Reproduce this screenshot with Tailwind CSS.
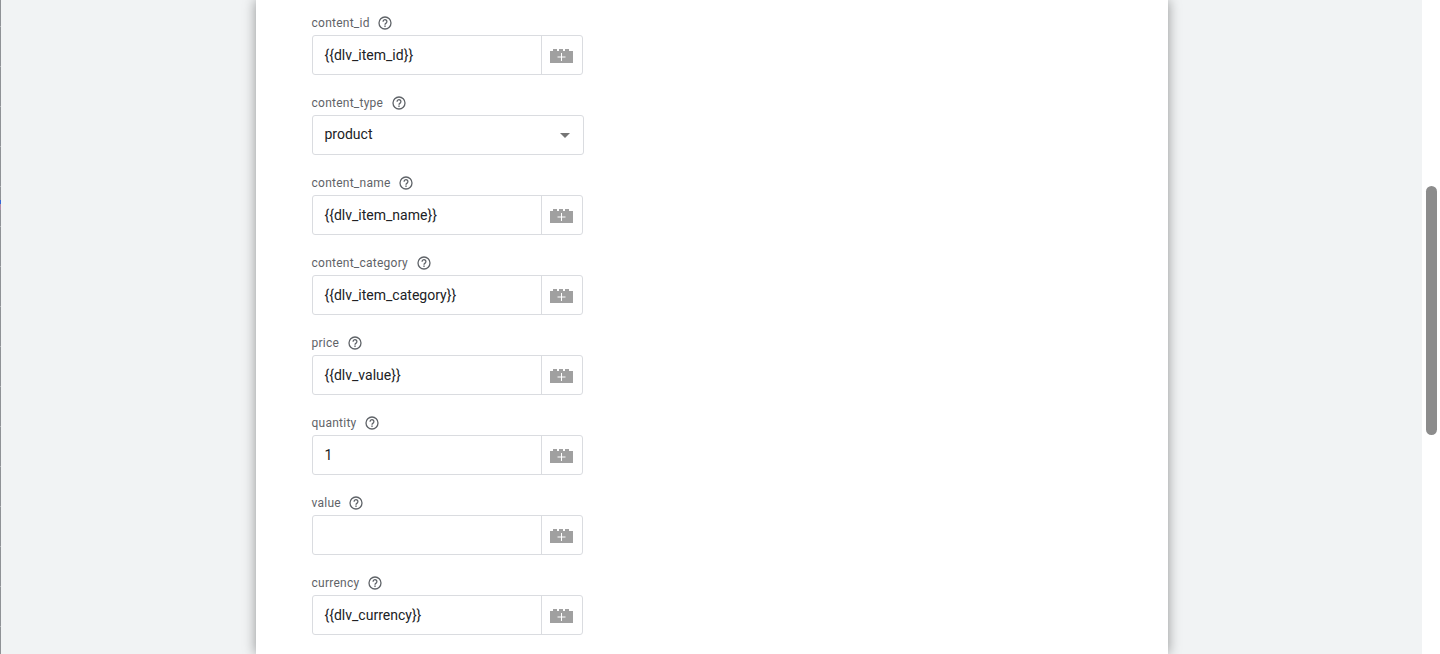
<!DOCTYPE html>
<html lang="en">
<head>
<meta charset="UTF-8">
<title>Tag configuration</title>
<script src="https://cdn.jsdelivr.net/npm/@tailwindcss/browser@4"></script>
</head>
<body class="h-[654px] overflow-hidden bg-[#f1f3f4] font-['Roboto',sans-serif]">
<svg class="hidden">
  <symbol id="help" viewBox="0 0 14 14">
    <circle cx="7" cy="7" r="6" fill="none" stroke="#5f6368" stroke-width="1.3"/>
    <path d="M5.100 5.700a1.900 1.900 0 1 1 3 1.400c-.7.5-1.100.9-1.100 1.600" fill="none" stroke="#5f6368" stroke-width="1.300"/>
    <rect x="6.300" y="9.500" width="1.400" height="1.400" fill="#5f6368"/>
  </symbol>
  <symbol id="brick" viewBox="0 0 23 14">
    <path d="M0 2h3V0h4v2h2V0h4v2h2V0h4v2h4v12H0z" fill="#a0a0a0"/>
    <path d="M11 4h1v3.500h3.500v1H12V12h-1V8.500H7.500v-1H11z" fill="#fff"/>
  </symbol>
</svg>
<div class="flex h-[654px]">
  <!-- edge of the window behind, with its tick marks -->
  <div class="relative w-px shrink-0 bg-[repeating-linear-gradient(to_bottom,#b0b2b5_-14px,#b0b2b5_-13px,#8f9296_-13px,#8f9296_26px)]">
    <div class="absolute top-[200px] h-1 w-px bg-[#3367d6]"></div>
    <div class="absolute top-[204px] h-1.5 w-px bg-[#b08aa8]"></div>
  </div>
  <div class="flex-1 pl-[255px]">
    <main class="h-[654px] w-[912px] bg-white pl-14 pt-[15px] shadow-[0_0_12px_rgba(0,0,0,0.4)]">

      <div class="mb-5">
        <div class="-ml-[0.5px] mb-1 flex h-4 items-center text-xs tracking-[0.25px] text-[#5f6368]">content_id<svg class="ml-[8.5px] size-[14px]"><use href="#help"/></svg></div>
        <div class="flex h-10 w-[271px] rounded-[3px] border border-[#dadce0] text-sm text-[#202124]">
          <div class="flex-1 pl-[11.5px] leading-[38px]">{{dlv_item_id}}</div>
          <div class="flex w-[41px] items-center justify-center border-l border-[#dadce0] pr-px pt-[2px]"><svg class="h-[14px] w-[23px]"><use href="#brick"/></svg></div>
        </div>
      </div>

      <div class="mb-5">
        <div class="-ml-[0.5px] mb-1 flex h-4 items-center text-xs tracking-[0.25px] text-[#5f6368]">content_type<svg class="ml-[8.5px] size-[14px]"><use href="#help"/></svg></div>
        <div class="flex h-10 w-[272px] items-center justify-between rounded-[3px] border border-[#dadce0] pl-[11.5px] pr-[13px] text-sm text-[#202124]">
          <span class="pb-[2px]">product</span>
          <span class="h-0 w-0 border-x-[5px] border-t-[5px] border-x-transparent border-t-[#757575]"></span>
        </div>
      </div>

      <div class="mb-5">
        <div class="-ml-[0.5px] mb-1 flex h-4 items-center text-xs tracking-[0.25px] text-[#5f6368]">content_name<svg class="ml-[8.5px] size-[14px]"><use href="#help"/></svg></div>
        <div class="flex h-10 w-[271px] rounded-[3px] border border-[#dadce0] text-sm text-[#202124]">
          <div class="flex-1 pl-[11.5px] leading-[38px]">{{dlv_item_name}}</div>
          <div class="flex w-[41px] items-center justify-center border-l border-[#dadce0] pr-px pt-[2px]"><svg class="h-[14px] w-[23px]"><use href="#brick"/></svg></div>
        </div>
      </div>

      <div class="mb-5">
        <div class="-ml-[0.5px] mb-1 flex h-4 items-center text-xs tracking-[0.25px] text-[#5f6368]">content_category<svg class="ml-[8.5px] size-[14px]"><use href="#help"/></svg></div>
        <div class="flex h-10 w-[271px] rounded-[3px] border border-[#dadce0] text-sm text-[#202124]">
          <div class="flex-1 pl-[11.5px] leading-[38px]">{{dlv_item_category}}</div>
          <div class="flex w-[41px] items-center justify-center border-l border-[#dadce0] pr-px pt-[2px]"><svg class="h-[14px] w-[23px]"><use href="#brick"/></svg></div>
        </div>
      </div>

      <div class="mb-5">
        <div class="-ml-[0.5px] mb-1 flex h-4 items-center text-xs tracking-[0.25px] text-[#5f6368]">price<svg class="ml-[8.5px] size-[14px]"><use href="#help"/></svg></div>
        <div class="flex h-10 w-[271px] rounded-[3px] border border-[#dadce0] text-sm text-[#202124]">
          <div class="flex-1 pl-[11.5px] leading-[38px]">{{dlv_value}}</div>
          <div class="flex w-[41px] items-center justify-center border-l border-[#dadce0] pr-px pt-[2px]"><svg class="h-[14px] w-[23px]"><use href="#brick"/></svg></div>
        </div>
      </div>

      <div class="mb-5">
        <div class="-ml-[0.5px] mb-1 flex h-4 items-center text-xs tracking-[0.25px] text-[#5f6368]">quantity<svg class="ml-[8.5px] size-[14px]"><use href="#help"/></svg></div>
        <div class="flex h-10 w-[271px] rounded-[3px] border border-[#dadce0] text-sm text-[#202124]">
          <div class="flex-1 pl-[11.5px] leading-[38px]">1</div>
          <div class="flex w-[41px] items-center justify-center border-l border-[#dadce0] pr-px pt-[2px]"><svg class="h-[14px] w-[23px]"><use href="#brick"/></svg></div>
        </div>
      </div>

      <div class="mb-5">
        <div class="-ml-[0.5px] mb-1 flex h-4 items-center text-xs tracking-[0.25px] text-[#5f6368]">value<svg class="ml-[8.5px] size-[14px]"><use href="#help"/></svg></div>
        <div class="flex h-10 w-[271px] rounded-[3px] border border-[#dadce0] text-sm text-[#202124]">
          <div class="flex-1 pl-[11.5px] leading-[38px]"></div>
          <div class="flex w-[41px] items-center justify-center border-l border-[#dadce0] pr-px pt-[2px]"><svg class="h-[14px] w-[23px]"><use href="#brick"/></svg></div>
        </div>
      </div>

      <div class="mb-5">
        <div class="-ml-[0.5px] mb-1 flex h-4 items-center text-xs tracking-[0.25px] text-[#5f6368]">currency<svg class="ml-[8.5px] size-[14px]"><use href="#help"/></svg></div>
        <div class="flex h-10 w-[271px] rounded-[3px] border border-[#dadce0] text-sm text-[#202124]">
          <div class="flex-1 pl-[11.5px] leading-[38px]">{{dlv_currency}}</div>
          <div class="flex w-[41px] items-center justify-center border-l border-[#dadce0] pr-px pt-[2px]"><svg class="h-[14px] w-[23px]"><use href="#brick"/></svg></div>
        </div>
      </div>

    </main>
  </div>
  <div class="w-[18px] shrink-0 bg-white pl-1 pt-[186px]">
    <div class="h-[249px] w-[11px] rounded-full bg-[#8c8c8c]"></div>
  </div>
</div>
</body>
</html>
